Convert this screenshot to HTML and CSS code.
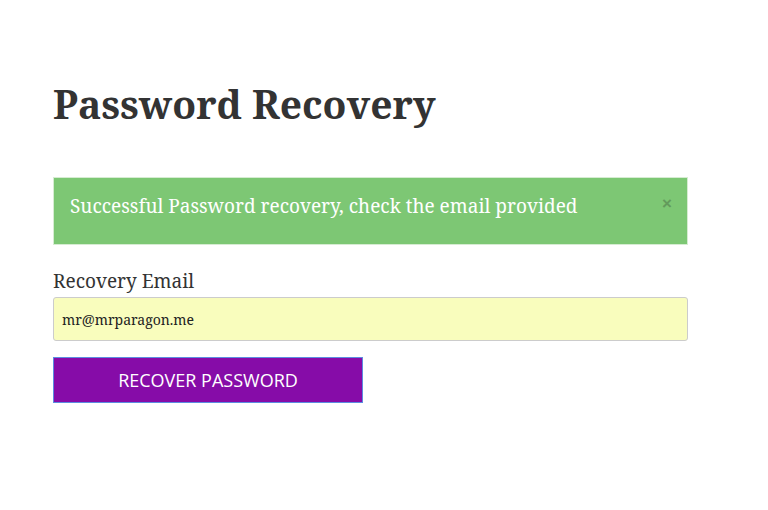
FILE: index.html
```html
<!DOCTYPE html>
<html>
<head>
<meta charset="utf-8">
<link rel="stylesheet" href="styles.css">
</head>
<body>
<main class="page">
  <h1 class="title">Password Recovery</h1>
  <div class="alert">
    <span class="alert-text">Successful Password recovery, check the email provided</span>
    <span class="close">×</span>
  </div>
  <form class="form">
    <label class="label" for="email">Recovery Email</label>
    <input class="input" id="email" type="email" value="mr@mrparagon.me">
    <button class="btn" type="button">RECOVER PASSWORD</button>
  </form>
</main>
</body>
</html>
```
FILE: styles.css
```css
html, body {
  margin: 0;
  padding: 0;
  background: #fff;
}
body {
  font-family: "Noto Serif", "Droid Serif", "DejaVu Serif", serif;
  color: #333;
}
.page {
  width: 635px;
  padding: 80px 0 0 53px;
}
.title {
  margin: 0;
  font-size: 39px;
  line-height: 48px;
  font-weight: 700;
  color: #333;
}
.alert {
  margin-top: 49px;
  height: 68px;
  box-sizing: border-box;
  background: #7dc774;
  border: 1px solid #d6ecd2;
  color: #fff;
  display: flex;
  justify-content: space-between;
  align-items: flex-start;
  padding: 15px 15px 0 16px;
}
.alert-text {
  font-size: 19px;
  line-height: 26px;
}
.close {
  font-family: "Liberation Sans", Arial, sans-serif;
  font-size: 17px;
  line-height: 22px;
  color: #5d8f57;
  font-weight: 700;
  opacity: .8;
}
.form {
  display: flex;
  flex-direction: column;
  align-items: flex-start;
  margin-top: 24px;
}
.label {
  font-size: 19px;
  line-height: 24px;
  margin-bottom: 4px;
}
.input {
  width: 635px;
  height: 44px;
  box-sizing: border-box;
  border: 1px solid #ccc;
  border-radius: 3px;
  background: #f9fdbd;
  font-family: "Noto Serif", "Droid Serif", "DejaVu Serif", serif;
  font-size: 14px;
  color: #222;
  padding: 0 8px;
  margin: 0;
}
.btn {
  margin-top: 16px;
  width: 310px;
  height: 46px;
  background: #860ca8;
  border: 1px solid #5b8de0;
  color: #fff;
  font-family: "Open Sans", sans-serif;
  font-size: 18px;
  padding: 0;
}
```
